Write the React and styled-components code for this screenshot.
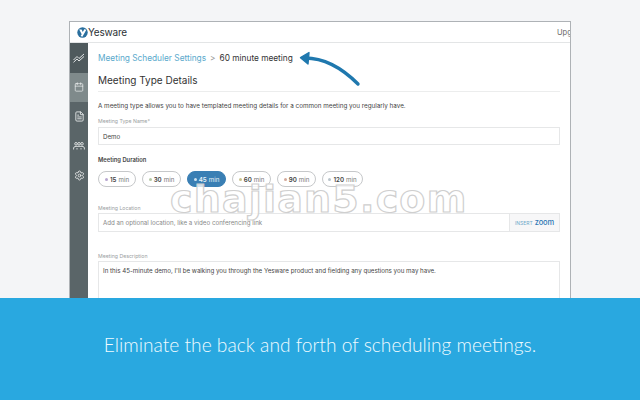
import React from 'react';
import styled, { createGlobalStyle } from 'styled-components';
import { Calendar, FileText, Settings } from 'lucide-react';

const GlobalStyle = createGlobalStyle`
  html, body {
    margin: 0;
    padding: 0;
    background: #f4f5f7;
  }
`;

const Page = styled.div`
  width: 640px;
  height: 400px;
  position: relative;
  overflow: hidden;
  display: flex;
  flex-direction: column;
  font-family: Inter, "Liberation Sans", sans-serif;
  background: #f4f5f7;
`;

const Stage = styled.div`
  height: 298px;
  padding: 21px 0 0 69px;
  box-sizing: border-box;
  overflow: hidden;
`;

const Window = styled.div`
  width: 502px;
  height: 300px;
  box-sizing: border-box;
  border: 1px solid #aeb2b6;
  border-bottom: 0;
  background: #fff;
  display: flex;
  flex-direction: column;
`;

const Header = styled.header`
  height: 20px;
  flex: none;
  border-bottom: 1px solid #e3e5e6;
  display: flex;
  align-items: center;
  justify-content: space-between;
  padding-left: 7px;
`;

const Logo = styled.div`
  display: flex;
  align-items: center;
  font-size: 10px;
  color: #2c3236;
  letter-spacing: -0.2px;
`;

const Upgrade = styled.div`
  width: 13px;
  overflow: hidden;
  white-space: nowrap;
  font-size: 7.5px;
  color: #666;
`;

const Body = styled.div`
  flex: 1;
  display: flex;
  min-height: 0;
`;

const Sidebar = styled.nav`
  width: 18px;
  flex: none;
  background: #5a6568;
  display: flex;
  flex-direction: column;
`;

const NavItem = styled.div`
  height: 29.5px;
  display: flex;
  align-items: center;
  justify-content: center;
  color: #f2f4f4;
  background: ${(p) => (p.$active ? '#7f8a8b' : p.$top ? '#4f5a5d' : 'transparent')};
`;

const Main = styled.main`
  flex: 1;
  padding: 8px 10px 0;
  min-width: 0;
`;

const Crumbs = styled.div`
  display: flex;
  align-items: center;
  height: 13px;
  font-size: 8.3px;
  color: #333;
`;

const CrumbLink = styled.span`
  color: #5aa9cc;
`;

const CrumbSep = styled.span`
  color: #9a9a9a;
  margin: 0 4px;
`;

const Title = styled.h1`
  margin: 8px 0 0;
  padding-bottom: 3px;
  height: 16px;
  line-height: 16px;
  font-size: 10px;
  font-weight: 400;
  color: #333;
  border-bottom: 1px solid #eceded;
`;

const Intro = styled.p`
  margin: 10px 0 0;
  font-size: 6.3px;
  line-height: 9px;
  color: #444;
`;

const FieldLabel = styled.div`
  margin-top: ${(p) => p.$top}px;
  font-size: 5.2px;
  line-height: 7px;
  color: #9a9ea1;
`;

const InputBox = styled.div`
  margin-top: ${(p) => p.$gap ?? 2}px;
  height: ${(p) => p.$height || 18}px;
  box-sizing: border-box;
  border: 1px solid #e6e7e8;
  display: flex;
  align-items: ${(p) => (p.$multi ? 'flex-start' : 'center')};
  font-size: 6.2px;
  color: ${(p) => (p.$muted ? '#888' : '#444')};
`;

const InputText = styled.div`
  flex: 1;
  padding: ${(p) => (p.$multi ? '4px 4px' : '0 4px')};
  line-height: 9px;
`;

const ZoomAddon = styled.div`
  width: 50px;
  height: 100%;
  flex: none;
  box-sizing: border-box;
  border-left: 1px solid #e6e7e8;
  background: #f7f7f8;
  display: flex;
  align-items: center;
  justify-content: center;
  gap: 2px;
  font-size: 5px;
  color: #6ea7c8;
`;

const ZoomWord = styled.span`
  font-size: 7.5px;
  font-weight: 500;
  color: #2f78b5;
  letter-spacing: -0.1px;
`;

const SectionLabel = styled.div`
  margin-top: 10px;
  font-size: 5.8px;
  line-height: 9px;
  font-weight: 600;
  color: #444;
`;

const Pills = styled.div`
  margin-top: 7px;
  display: flex;
  gap: 6px;
`;

const Pill = styled.div`
  width: ${(p) => p.$width}px;
  height: 16px;
  box-sizing: border-box;
  border-radius: 8px;
  border: 1px solid ${(p) => (p.$active ? '#3a7fb4' : '#c6c8ca')};
  background: ${(p) => (p.$active ? '#3a7fb4' : '#fff')};
  color: ${(p) => (p.$active ? '#e8f2f8' : '#777')};
  display: flex;
  align-items: center;
  justify-content: center;
  gap: 2px;
  font-size: 6.2px;
  white-space: nowrap;
`;

const PillValue = styled.span`
  font-weight: 600;
  color: ${(p) => (p.$active ? '#e8f2f8' : '#444')};
`;

const Dot = styled.span`
  width: 3px;
  height: 3px;
  border-radius: 50%;
  background: ${(p) => p.$color};
`;

const Banner = styled.div`
  height: 102px;
  flex: none;
  background: #29a8e0;
  display: flex;
  align-items: center;
  justify-content: center;
  color: #f0fbff;
  font-family: Lato, "Open Sans", sans-serif;
  font-weight: 300;
  font-size: 19.2px;
  padding-bottom: 10px;
  box-sizing: border-box;
`;

const Watermark = styled.div`
  position: absolute;
  left: 170px;
  top: 174px;
  font-family: "DejaVu Sans", sans-serif;
  font-weight: 700;
  font-size: 38px;
  line-height: 50px;
  letter-spacing: 1.2px;
  color: rgba(255, 255, 255, 0.8);
  -webkit-text-stroke: 1.2px #cfcfcf;
  white-space: nowrap;
`;

const Arrow = styled.svg`
  position: absolute;
  left: 296px;
  top: 48px;
`;

const ChartIcon = () => (
  <svg width="12" height="10" viewBox="0 0 12 10" fill="none" stroke="currentColor" strokeWidth="0.9">
    <path d="M0.5 7 L4 3.5 L6 5.5 L11 1" />
    <path d="M0.5 9.3 L4 6 L6 8 L11 3.5" />
  </svg>
);

const TeamIcon = () => (
  <svg width="12" height="10" viewBox="0 0 12 10" fill="none" stroke="currentColor" strokeWidth="0.8">
    <circle cx="3" cy="2.8" r="1.3" />
    <circle cx="6" cy="2.8" r="1.3" />
    <circle cx="9" cy="2.8" r="1.3" />
    <path d="M0.6 8.5 V7 Q0.6 5.4 3 5.4 H9 Q11.4 5.4 11.4 7 V8.5" />
    <path d="M4 8.5 V7 M8 8.5 V7" />
  </svg>
);

const LogoMark = () => (
  <svg width="11" height="11" viewBox="0 0 11 11">
    <circle cx="5.5" cy="5.5" r="5.2" fill="#2a6f9e" />
    <path d="M2.2 2.6 L4.6 2.6 L5.7 5 L7.6 2 L9.2 3 L5.4 9.8 L3.6 9 L4.7 7.2 Z" fill="#fff" />
  </svg>
);

const durations = [
  { value: '15', width: 38, dot: '#b7a6cf' },
  { value: '30', width: 39, dot: '#b5c9a4' },
  { value: '45', width: 39, dot: '#cfe3f0', active: true },
  { value: '60', width: 39, dot: '#c9c28c' },
  { value: '90', width: 39, dot: '#d3a99a' },
  { value: '120', width: 41, dot: '#b9c4cb' },
];

const App = () => (
  <Page>
    <GlobalStyle />
    <Stage>
      <Window>
        <Header>
          <Logo>
            <LogoMark />
            Yesware
          </Logo>
          <Upgrade>Upgrade</Upgrade>
        </Header>
        <Body>
          <Sidebar>
            <NavItem $top><ChartIcon /></NavItem>
            <NavItem $active><Calendar size={10} strokeWidth={1.6} /></NavItem>
            <NavItem><FileText size={11} strokeWidth={1.8} /></NavItem>
            <NavItem><TeamIcon /></NavItem>
            <NavItem><Settings size={11} strokeWidth={1.7} /></NavItem>
          </Sidebar>
          <Main>
            <Crumbs>
              <CrumbLink>Meeting Scheduler Settings</CrumbLink>
              <CrumbSep>&gt;</CrumbSep>
              60 minute meeting
            </Crumbs>
            <Title>Meeting Type Details</Title>
            <Intro>A meeting type allows you to have templated meeting details for a common meeting you regularly have.</Intro>
            <FieldLabel $top={7}>Meeting Type Name*</FieldLabel>
            <InputBox>
              <InputText>Demo</InputText>
            </InputBox>
            <SectionLabel>Meeting Duration</SectionLabel>
            <Pills>
              {durations.map((d) => (
                <Pill key={d.value} $width={d.width} $active={d.active}>
                  <Dot $color={d.dot} />
                  <PillValue $active={d.active}>{d.value}</PillValue> min
                </Pill>
              ))}
            </Pills>
            <FieldLabel $top={18}>Meeting Location</FieldLabel>
            <InputBox $height={19} $gap={1} $muted>
              <InputText>Add an optional location, like a video conferencing link</InputText>
              <ZoomAddon>INSERT <ZoomWord>zoom</ZoomWord></ZoomAddon>
            </InputBox>
            <FieldLabel $top={21}>Meeting Description</FieldLabel>
            <InputBox $height={60} $gap={1} $multi>
              <InputText $multi>In this 45-minute demo, I'll be walking you through the Yesware product and fielding any questions you may have.</InputText>
            </InputBox>
          </Main>
        </Body>
      </Window>
    </Stage>
    <Banner>Eliminate the back and forth of scheduling meetings.</Banner>
    <Watermark>chajian5.com</Watermark>
    <Arrow width="70" height="42" viewBox="0 0 70 42" fill="none">
      <path d="M9 10 C28 10 47 21 62 36" stroke="#1f78ae" strokeWidth="3.4" strokeLinecap="round" />
      <path d="M4.5 9.6 L13 4.5 L12 16 Z" fill="#1f78ae" stroke="#1f78ae" strokeWidth="1.4" strokeLinejoin="round" />
    </Arrow>
  </Page>
);

export default App;
